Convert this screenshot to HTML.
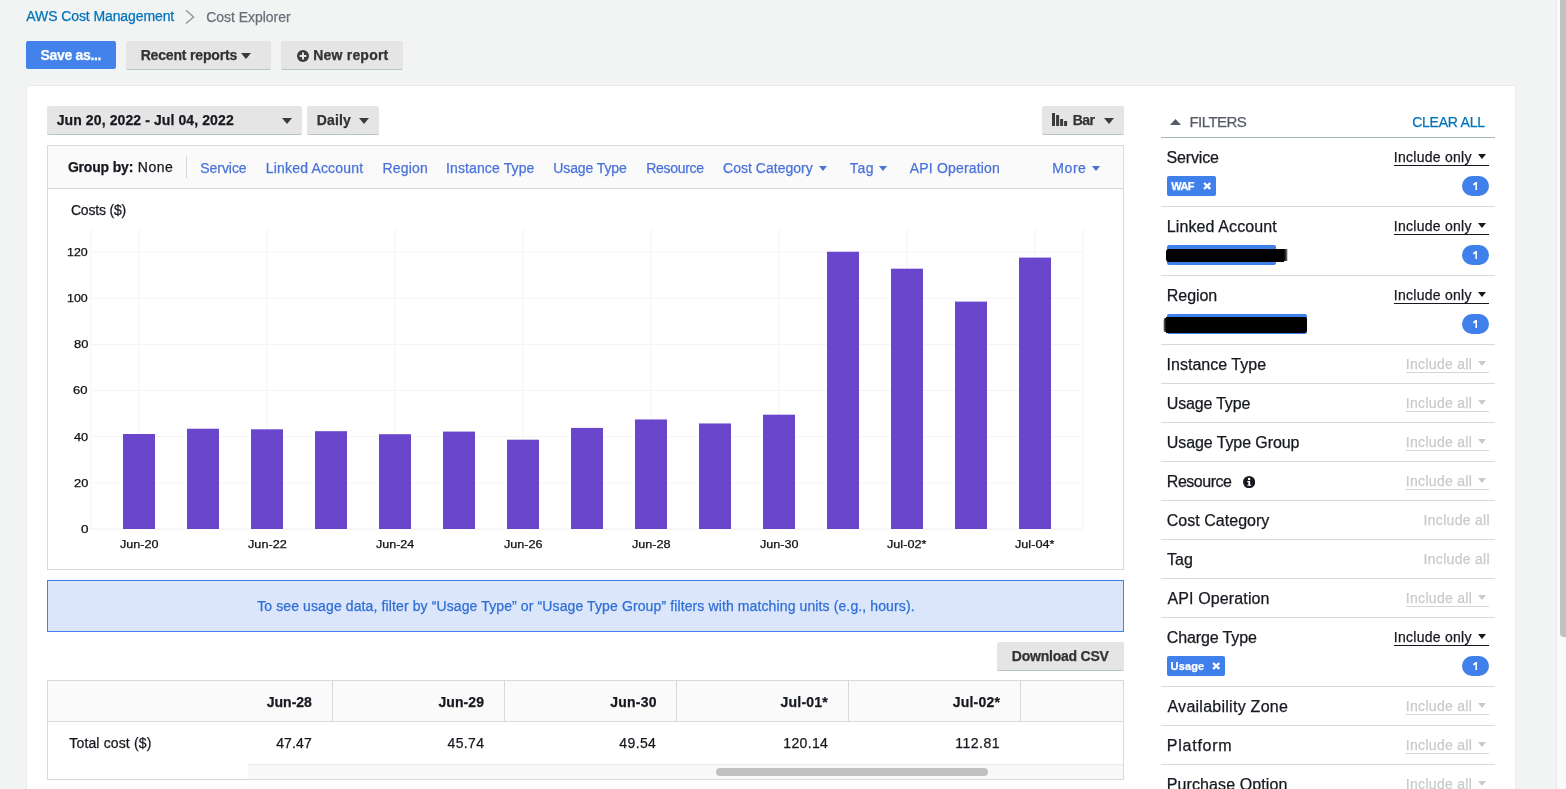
<!DOCTYPE html>
<html>
<head>
<meta charset="utf-8">
<title>Cost Explorer</title>
<style>
*{box-sizing:border-box;margin:0;padding:0}
html,body{width:1566px;height:789px;overflow:hidden;background:#f2f3f3;font-family:"Liberation Sans",sans-serif;color:#16191f}
body{position:relative}
.abs{position:absolute;white-space:nowrap}
.t{position:absolute;white-space:nowrap;line-height:20px;height:20px;-webkit-text-stroke:0.25px currentColor}
.panel{position:absolute;left:27px;top:86px;width:1488px;height:720px;background:#fff;box-shadow:0 0 0 1px #e9ebeb;border-radius:1px}
.btn{position:absolute;height:29px;background:#e5e5e5;border-bottom:1px solid #b9c6c6;border-radius:2px}
.caret{position:absolute;width:0;height:0;border-left:5px solid transparent;border-right:5px solid transparent;border-top:6px solid #3b3b3b}
.chip{position:absolute;height:19.6px;background:#4080ea;border-radius:2px}
.badge{position:absolute;left:1462px;width:27px;height:19.6px;border-radius:10px;background:#4080ea}
.bar{position:absolute;width:32px;background:#6945cb}
.hg{position:absolute;left:91px;width:992px;height:1px;background:#f3f3f3}
.vg{position:absolute;top:229px;width:2px;height:300px;background:#f9f9f9}
.cs{position:absolute;top:681px;width:1px;height:40px;background:#d5dbdb}
</style>
</head>
<body>
<div id="w" style="position:absolute;left:0;top:0;width:1566px;height:789px;will-change:transform">
<!-- breadcrumb chevron -->
<svg class="abs" style="left:184px;top:9px" width="12" height="16" viewBox="0 0 12 16"><path d="M2 1.2 L9.6 7.9 L2 14.6" fill="none" stroke="#879596" stroke-width="1.3"/></svg>

<!-- top buttons -->
<div class="abs" style="left:26px;top:41px;width:90px;height:28px;background:#4282ea;border-radius:2px"></div>
<div class="btn" style="left:126px;top:41px;width:145px"><span class="caret" style="left:115.3px;top:11.8px;border-left-width:5.5px;border-right-width:5.5px"></span></div>
<div class="btn" style="left:281px;top:41px;width:122px">
<svg class="abs" style="left:16.1px;top:8.8px" width="12" height="12" viewBox="0 0 12 12"><circle cx="6" cy="6" r="6" fill="#3b3b3b"/><path d="M6 2.6v6.8M2.6 6h6.8" stroke="#e5e5e5" stroke-width="2"/></svg>
</div>

<div class="panel"></div>

<!-- controls row -->
<div class="btn" style="left:47px;top:106px;width:255px"><span class="caret" style="left:235.1px;top:12.1px"></span></div>
<div class="btn" style="left:307px;top:106px;width:72px"><span class="caret" style="left:52.2px;top:12.1px"></span></div>
<div class="btn" style="left:1042px;top:106px;width:82px"><span class="caret" style="left:61.9px;top:12.1px"></span>
<svg class="abs" style="left:10px;top:7px" width="16" height="13" viewBox="0 0 16 13"><rect x="0" y="0" width="3" height="13" fill="#3b3b3b"/><rect x="4.1" y="2" width="3" height="11" fill="#3b3b3b"/><rect x="8.1" y="6" width="3" height="7" fill="#3b3b3b"/><rect x="12.1" y="8" width="3" height="5" fill="#3b3b3b"/></svg>
</div>

<!-- group by -->
<div class="abs" style="left:47px;top:145px;width:1077px;height:44px;background:#fafafa;border:1px solid #d5dbdb"></div>
<div class="abs" style="left:186px;top:156px;width:1px;height:22px;background:#d5dbdb"></div>
<span class="caret" style="left:819px;top:165.5px;border-left-width:4.2px;border-right-width:4.2px;border-top:5px solid #4a72d9"></span>
<span class="caret" style="left:878.7px;top:165.5px;border-left-width:4.2px;border-right-width:4.2px;border-top:5px solid #4a72d9"></span>
<span class="caret" style="left:1091.7px;top:165.5px;border-left-width:4.2px;border-right-width:4.2px;border-top:5px solid #4a72d9"></span>

<!-- chart box -->
<div class="abs" style="left:47px;top:188px;width:1077px;height:382px;background:#fff;border:1px solid #d5dbdb"></div>
<div class="hg" style="top:528px;background:rgb(249,249,249)"></div>
<div class="hg" style="top:529px;background:rgb(249,249,249)"></div>
<div class="hg" style="top:482px;background:rgb(247,247,247)"></div>
<div class="hg" style="top:483px;background:rgb(251,251,251)"></div>
<div class="hg" style="top:436px;background:rgb(245,245,245)"></div>
<div class="hg" style="top:437px;background:rgb(253,253,253)"></div>
<div class="hg" style="top:390px;background:rgb(243,243,243)"></div>
<div class="hg" style="top:343px;background:rgb(254,254,254)"></div>
<div class="hg" style="top:344px;background:rgb(244,244,244)"></div>
<div class="hg" style="top:297px;background:rgb(252,252,252)"></div>
<div class="hg" style="top:298px;background:rgb(246,246,246)"></div>
<div class="hg" style="top:251px;background:rgb(250,250,250)"></div>
<div class="hg" style="top:252px;background:rgb(248,248,248)"></div>
<div class="vg" style="left:90px"></div>
<div class="vg" style="left:138px"></div>
<div class="vg" style="left:266px"></div>
<div class="vg" style="left:394px"></div>
<div class="vg" style="left:522px"></div>
<div class="vg" style="left:650px"></div>
<div class="vg" style="left:778px"></div>
<div class="vg" style="left:906px"></div>
<div class="vg" style="left:1034px"></div>
<div class="vg" style="left:1082px"></div>
<svg class="abs" style="left:0;top:0" width="1130" height="540" viewBox="0 0 1130 540"><g fill="#6a46cd"><rect x="123" y="433.99" width="32" height="95.01"/><rect x="187" y="428.71" width="32" height="100.29"/><rect x="251" y="429.31" width="32" height="99.69"/><rect x="315" y="431.20" width="32" height="97.80"/><rect x="379" y="434.20" width="32" height="94.80"/><rect x="443" y="431.59" width="32" height="97.41"/><rect x="507" y="439.69" width="32" height="89.31"/><rect x="571" y="427.90" width="32" height="101.10"/><rect x="635" y="419.45" width="32" height="109.55"/><rect x="699" y="423.45" width="32" height="105.55"/><rect x="763" y="414.68" width="32" height="114.32"/><rect x="827" y="251.75" width="32" height="277.25"/><rect x="891" y="268.67" width="32" height="260.33"/><rect x="955" y="301.60" width="32" height="227.40"/><rect x="1019" y="257.59" width="32" height="271.41"/></g></svg>

<!-- info box -->
<div class="abs" style="left:47px;top:580px;width:1077px;height:52px;background:#dbe6fb;border:1px solid #4281ea"></div>

<!-- download -->
<div class="btn" style="left:997px;top:642px;width:127px"></div>

<!-- table -->
<div class="abs" style="left:47px;top:680px;width:1077px;height:100px;background:#fff;border:1px solid #d5dbdb"></div>
<div class="abs" style="left:48px;top:681px;width:1075px;height:41px;background:#fafafa;border-bottom:1px solid #d5dbdb"></div>
<div class="cs" style="left:332px"></div><div class="cs" style="left:504px"></div><div class="cs" style="left:676px"></div><div class="cs" style="left:848px"></div><div class="cs" style="left:1020px"></div>
<div class="abs" style="left:248px;top:764px;width:875px;height:15px;background:#f8f8f8;border-top:1px solid #e8e8e8"></div>
<div class="abs" style="left:716px;top:768px;width:272px;height:8px;border-radius:4px;background:#c1c1c1"></div>

<!-- filters -->
<svg class="abs" style="left:1169.7px;top:119px" width="11" height="6" viewBox="0 0 11 6"><path d="M0 6 L5.5 0 L11 6Z" fill="#545b64"/></svg>
<div class="abs" style="left:1161px;top:137px;width:334px;height:1px;background:#aab7b8"></div>
<div class="abs" style="left:1394px;top:164.6px;width:95px;height:1px;background:#16191f"></div>
<div class="caret" style="left:1478.4px;top:154.3px;border-left-width:4.2px;border-right-width:4.2px;border-top:5px solid #16191f"></div>
<div class="chip" style="left:1167px;top:176.3px;width:49px"><svg class="abs" style="left:35.5px;top:5.7px" width="8.4" height="8" viewBox="0 0 8.4 8"><path d="M1.1 1L7.3 7M7.3 1L1.1 7" stroke="#fff" stroke-width="2.4"/></svg></div>
<div class="badge" style="top:176.3px"><svg class="abs" style="left:10.8px;top:5.9px" width="4.6" height="8.2" viewBox="0 0 4.6 8.2"><path d="M2.5 0H4.5V8.2H2.4V2.5L0.5 3.5L0 2Z" fill="#fff"/></svg></div>
<div class="abs" style="left:1161px;top:206px;width:334px;height:1px;background:#d5d9d9"></div>
<div class="abs" style="left:1394px;top:233.6px;width:95px;height:1px;background:#16191f"></div>
<div class="caret" style="left:1478.4px;top:223.3px;border-left-width:4.2px;border-right-width:4.2px;border-top:5px solid #16191f"></div>
<div class="chip" style="left:1167px;top:245.0px;width:109px;height:20px"></div>
<div class="abs" style="left:1165.7px;top:249.0px;width:118px;height:12.6px;background:#000;border-radius:3px 0 0 3px"></div>
<div class="abs" style="left:1283.6px;top:249.2px;width:4.2px;height:11.6px;background:linear-gradient(90deg,#000,rgba(0,0,0,.75) 55%,rgba(0,0,0,0))"></div>
<div class="badge" style="top:245.3px"><svg class="abs" style="left:10.8px;top:5.9px" width="4.6" height="8.2" viewBox="0 0 4.6 8.2"><path d="M2.5 0H4.5V8.2H2.4V2.5L0.5 3.5L0 2Z" fill="#fff"/></svg></div>
<div class="abs" style="left:1161px;top:275px;width:334px;height:1px;background:#d5d9d9"></div>
<div class="abs" style="left:1394px;top:302.6px;width:95px;height:1px;background:#16191f"></div>
<div class="caret" style="left:1478.4px;top:292.3px;border-left-width:4.2px;border-right-width:4.2px;border-top:5px solid #16191f"></div>
<div class="chip" style="left:1167px;top:314.0px;width:140px"></div>
<div class="abs" style="left:1165.5px;top:317.1px;width:141.7px;height:15.6px;background:#000;border-radius:0 2px 3px 0"></div>
<div class="abs" style="left:1162.6px;top:318.3px;width:3px;height:13.6px;background:linear-gradient(270deg,#000,rgba(0,0,0,.7) 50%,rgba(0,0,0,0));border-radius:4px 0 0 4px"></div>
<div class="badge" style="top:314.3px"><svg class="abs" style="left:10.8px;top:5.9px" width="4.6" height="8.2" viewBox="0 0 4.6 8.2"><path d="M2.5 0H4.5V8.2H2.4V2.5L0.5 3.5L0 2Z" fill="#fff"/></svg></div>
<div class="abs" style="left:1161px;top:344px;width:334px;height:1px;background:#d5d9d9"></div>
<div class="abs" style="left:1406px;top:371.6px;width:83px;height:1px;background:#d3d6d6"></div>
<div class="caret" style="left:1478.4px;top:361.3px;border-left-width:4.2px;border-right-width:4.2px;border-top:5px solid #c9cbcb"></div>
<div class="abs" style="left:1161px;top:383px;width:334px;height:1px;background:#d5d9d9"></div>
<div class="abs" style="left:1406px;top:410.6px;width:83px;height:1px;background:#d3d6d6"></div>
<div class="caret" style="left:1478.4px;top:400.3px;border-left-width:4.2px;border-right-width:4.2px;border-top:5px solid #c9cbcb"></div>
<div class="abs" style="left:1161px;top:422px;width:334px;height:1px;background:#d5d9d9"></div>
<div class="abs" style="left:1406px;top:449.6px;width:83px;height:1px;background:#d3d6d6"></div>
<div class="caret" style="left:1478.4px;top:439.3px;border-left-width:4.2px;border-right-width:4.2px;border-top:5px solid #c9cbcb"></div>
<div class="abs" style="left:1161px;top:461px;width:334px;height:1px;background:#d5d9d9"></div>
<svg class="abs" style="left:1242.8px;top:475.6px" width="12.2" height="12.2" viewBox="0 0 12 12"><circle cx="6" cy="6" r="6" fill="#16191f"/><circle cx="6" cy="3" r="1.25" fill="#fff"/><path d="M4.3 5h2.7v3.6h1v1.1H4.3V8.6h1V6.1h-1z" fill="#fff"/></svg>
<div class="abs" style="left:1406px;top:488.6px;width:83px;height:1px;background:#d3d6d6"></div>
<div class="caret" style="left:1478.4px;top:478.3px;border-left-width:4.2px;border-right-width:4.2px;border-top:5px solid #c9cbcb"></div>
<div class="abs" style="left:1161px;top:500px;width:334px;height:1px;background:#d5d9d9"></div>
<div class="abs" style="left:1161px;top:539px;width:334px;height:1px;background:#d5d9d9"></div>
<div class="abs" style="left:1161px;top:578px;width:334px;height:1px;background:#d5d9d9"></div>
<div class="abs" style="left:1406px;top:605.6px;width:83px;height:1px;background:#d3d6d6"></div>
<div class="caret" style="left:1478.4px;top:595.3px;border-left-width:4.2px;border-right-width:4.2px;border-top:5px solid #c9cbcb"></div>
<div class="abs" style="left:1161px;top:617px;width:334px;height:1px;background:#d5d9d9"></div>
<div class="abs" style="left:1394px;top:644.6px;width:95px;height:1px;background:#16191f"></div>
<div class="caret" style="left:1478.4px;top:634.3px;border-left-width:4.2px;border-right-width:4.2px;border-top:5px solid #16191f"></div>
<div class="chip" style="left:1167px;top:656.3px;width:58px"><svg class="abs" style="left:44.5px;top:5.7px" width="8.4" height="8" viewBox="0 0 8.4 8"><path d="M1.1 1L7.3 7M7.3 1L1.1 7" stroke="#fff" stroke-width="2.4"/></svg></div>
<div class="badge" style="top:656.3px"><svg class="abs" style="left:10.8px;top:5.9px" width="4.6" height="8.2" viewBox="0 0 4.6 8.2"><path d="M2.5 0H4.5V8.2H2.4V2.5L0.5 3.5L0 2Z" fill="#fff"/></svg></div>
<div class="abs" style="left:1161px;top:686px;width:334px;height:1px;background:#d5d9d9"></div>
<div class="abs" style="left:1406px;top:713.6px;width:83px;height:1px;background:#d3d6d6"></div>
<div class="caret" style="left:1478.4px;top:703.3px;border-left-width:4.2px;border-right-width:4.2px;border-top:5px solid #c9cbcb"></div>
<div class="abs" style="left:1161px;top:725px;width:334px;height:1px;background:#d5d9d9"></div>
<div class="abs" style="left:1406px;top:752.6px;width:83px;height:1px;background:#d3d6d6"></div>
<div class="caret" style="left:1478.4px;top:742.3px;border-left-width:4.2px;border-right-width:4.2px;border-top:5px solid #c9cbcb"></div>
<div class="abs" style="left:1161px;top:764px;width:334px;height:1px;background:#d5d9d9"></div>
<div class="abs" style="left:1406px;top:791.6px;width:83px;height:1px;background:#d3d6d6"></div>
<div class="caret" style="left:1478.4px;top:781.3px;border-left-width:4.2px;border-right-width:4.2px;border-top:5px solid #c9cbcb"></div>
<div class="abs" style="left:1161px;top:803px;width:334px;height:1px;background:#d5d9d9"></div>

<!-- all text -->
<div class="t" style="left:26.35px;top:6.06px;font-size:14px;color:#0073bb;letter-spacing:-0.097px">AWS Cost Management</div>
<div class="t" style="left:206.20px;top:7.06px;font-size:14px;color:#687078;letter-spacing:-0.026px">Cost Explorer</div>
<div class="t" style="left:40.53px;top:45.16px;font-size:14px;color:#fff;letter-spacing:-0.327px;font-weight:bold">Save as...</div>
<div class="t" style="left:140.66px;top:45.16px;font-size:14px;color:#333;letter-spacing:-0.165px;font-weight:bold">Recent reports</div>
<div class="t" style="left:313.25px;top:45.16px;font-size:14px;color:#333;letter-spacing:0.202px;font-weight:bold">New report</div>
<div class="t" style="left:56.70px;top:110.16px;font-size:14px;color:#16191f;letter-spacing:0.102px;font-weight:bold">Jun 20, 2022 - Jul 04, 2022</div>
<div class="t" style="left:316.85px;top:110.16px;font-size:14px;color:#333;letter-spacing:0.136px;font-weight:bold">Daily</div>
<div class="t" style="left:1072.74px;top:110.16px;font-size:14px;color:#333;letter-spacing:-0.555px;font-weight:bold">Bar</div>
<div class="t" style="left:67.89px;top:157.36px;font-size:14px;color:#16191f;letter-spacing:-0.183px;font-weight:bold">Group by:</div>
<div class="t" style="left:137.85px;top:157.36px;font-size:14px;color:#16191f;letter-spacing:0.526px">None</div>
<div class="t" style="left:200.30px;top:158.36px;font-size:14px;color:#4a72d9;letter-spacing:-0.060px">Service</div>
<div class="t" style="left:265.78px;top:158.36px;font-size:14px;color:#4a72d9;letter-spacing:0.181px">Linked Account</div>
<div class="t" style="left:382.59px;top:158.36px;font-size:14px;color:#4a72d9;letter-spacing:0.172px">Region</div>
<div class="t" style="left:446.03px;top:158.36px;font-size:14px;color:#4a72d9;letter-spacing:0.117px">Instance Type</div>
<div class="t" style="left:553.27px;top:158.36px;font-size:14px;color:#4a72d9;letter-spacing:-0.107px">Usage Type</div>
<div class="t" style="left:646.18px;top:158.36px;font-size:14px;color:#4a72d9;letter-spacing:-0.289px">Resource</div>
<div class="t" style="left:723.10px;top:158.36px;font-size:14px;color:#4a72d9;letter-spacing:0.010px">Cost Category</div>
<div class="t" style="left:849.84px;top:158.36px;font-size:14px;color:#4a72d9;letter-spacing:0.594px">Tag</div>
<div class="t" style="left:909.87px;top:158.36px;font-size:14px;color:#4a72d9;letter-spacing:0.165px">API Operation</div>
<div class="t" style="left:1052.30px;top:158.36px;font-size:14px;color:#4a72d9;letter-spacing:0.568px">More</div>
<div class="t" style="left:70.90px;top:199.96px;font-size:14px;color:#16191f;letter-spacing:-0.179px">Costs ($)</div>
<div class="t" style="left:257.15px;top:595.86px;font-size:14px;color:#2f6fd6;letter-spacing:0.115px">To see usage data, filter by “Usage Type” or “Usage Type Group” filters with matching units (e.g., hours).</div>
<div class="t" style="left:1011.85px;top:645.96px;font-size:14px;color:#333;letter-spacing:-0.225px;font-weight:bold">Download CSV</div>
<div class="t" style="left:266.68px;top:692.36px;font-size:14px;color:#16191f;letter-spacing:0.023px;font-weight:bold">Jun-28</div>
<div class="t" style="left:438.49px;top:692.36px;font-size:14px;color:#16191f;letter-spacing:0.066px;font-weight:bold">Jun-29</div>
<div class="t" style="left:610.25px;top:692.36px;font-size:14px;color:#16191f;letter-spacing:0.215px;font-weight:bold">Jun-30</div>
<div class="t" style="left:780.49px;top:692.36px;font-size:14px;color:#16191f;letter-spacing:0.225px;font-weight:bold">Jul-01*</div>
<div class="t" style="left:952.68px;top:692.36px;font-size:14px;color:#16191f;letter-spacing:0.210px;font-weight:bold">Jul-02*</div>
<div class="t" style="left:69.35px;top:733.46px;font-size:14px;color:#16191f;letter-spacing:0.142px">Total cost ($)</div>
<div class="t" style="left:276.18px;top:733.46px;font-size:14px;color:#16191f;letter-spacing:0.159px">47.47</div>
<div class="t" style="left:447.47px;top:733.46px;font-size:14px;color:#16191f;letter-spacing:0.377px">45.74</div>
<div class="t" style="left:619.27px;top:733.46px;font-size:14px;color:#16191f;letter-spacing:0.399px">49.54</div>
<div class="t" style="left:783.25px;top:733.46px;font-size:14px;color:#16191f;letter-spacing:0.357px">120.14</div>
<div class="t" style="left:955.25px;top:733.46px;font-size:14px;color:#16191f;letter-spacing:0.488px">112.81</div>
<div class="t" style="left:80.64px;top:518.92px;font-size:10.7px;color:#111;transform:scaleX(1.2600);transform-origin:0 50%">0</div>
<div class="t" style="left:73.76px;top:472.77px;font-size:10.7px;color:#111;transform:scaleX(1.2021);transform-origin:0 50%">20</div>
<div class="t" style="left:73.87px;top:426.62px;font-size:10.7px;color:#111;transform:scaleX(1.1933);transform-origin:0 50%">40</div>
<div class="t" style="left:73.48px;top:380.46px;font-size:10.7px;color:#111;transform:scaleX(1.2154);transform-origin:0 50%">60</div>
<div class="t" style="left:73.61px;top:334.31px;font-size:10.7px;color:#111;transform:scaleX(1.2047);transform-origin:0 50%">80</div>
<div class="t" style="left:67.32px;top:288.15px;font-size:10.7px;color:#111;transform:scaleX(1.1579);transform-origin:0 50%">100</div>
<div class="t" style="left:67.32px;top:242.00px;font-size:10.7px;color:#111;transform:scaleX(1.1579);transform-origin:0 50%">120</div>
<div class="t" style="left:119.63px;top:534.42px;font-size:10.7px;color:#111;transform:scaleX(1.1779);transform-origin:0 50%">Jun-20</div>
<div class="t" style="left:247.63px;top:534.42px;font-size:10.7px;color:#111;transform:scaleX(1.1859);transform-origin:0 50%">Jun-22</div>
<div class="t" style="left:375.64px;top:534.42px;font-size:10.7px;color:#111;transform:scaleX(1.1717);transform-origin:0 50%">Jun-24</div>
<div class="t" style="left:503.63px;top:534.42px;font-size:10.7px;color:#111;transform:scaleX(1.1805);transform-origin:0 50%">Jun-26</div>
<div class="t" style="left:631.63px;top:534.42px;font-size:10.7px;color:#111;transform:scaleX(1.1798);transform-origin:0 50%">Jun-28</div>
<div class="t" style="left:759.63px;top:534.42px;font-size:10.7px;color:#111;transform:scaleX(1.1779);transform-origin:0 50%">Jun-30</div>
<div class="t" style="left:887.28px;top:534.42px;font-size:10.7px;color:#111;transform:scaleX(1.1846);transform-origin:0 50%">Jul-02*</div>
<div class="t" style="left:1015.28px;top:534.42px;font-size:10.7px;color:#111;transform:scaleX(1.1846);transform-origin:0 50%">Jul-04*</div>
<div class="t" style="left:1189.49px;top:111.77px;font-size:15px;color:#545b64;letter-spacing:-0.554px">FILTERS</div>
<div class="t" style="left:1412.20px;top:112.06px;font-size:14px;color:#0073bb;letter-spacing:-0.237px">CLEAR ALL</div>
<div class="t" style="left:1166.58px;top:148.48px;font-size:16px;color:#16191f;letter-spacing:-0.158px">Service</div>
<div class="t" style="left:1393.85px;top:147.36px;font-size:14px;color:#16191f;letter-spacing:0.258px">Include only</div>
<div class="t" style="left:1171.20px;top:176.13px;font-size:11px;color:#fff;letter-spacing:-0.517px;font-weight:bold">WAF</div>
<div class="t" style="left:1166.84px;top:217.48px;font-size:16px;color:#16191f;letter-spacing:0.107px">Linked Account</div>
<div class="t" style="left:1393.85px;top:216.36px;font-size:14px;color:#16191f;letter-spacing:0.258px">Include only</div>
<div class="t" style="left:1166.84px;top:286.48px;font-size:16px;color:#16191f;letter-spacing:-0.058px">Region</div>
<div class="t" style="left:1393.85px;top:285.36px;font-size:14px;color:#16191f;letter-spacing:0.258px">Include only</div>
<div class="t" style="left:1166.55px;top:355.48px;font-size:16px;color:#16191f;letter-spacing:0.020px">Instance Type</div>
<div class="t" style="left:1405.85px;top:354.36px;font-size:14px;color:#c9cbcb;letter-spacing:0.298px">Include all</div>
<div class="t" style="left:1166.86px;top:394.48px;font-size:16px;color:#16191f;letter-spacing:-0.184px">Usage Type</div>
<div class="t" style="left:1405.85px;top:393.36px;font-size:14px;color:#c9cbcb;letter-spacing:0.298px">Include all</div>
<div class="t" style="left:1166.86px;top:433.48px;font-size:16px;color:#16191f;letter-spacing:-0.098px">Usage Type Group</div>
<div class="t" style="left:1405.85px;top:432.36px;font-size:14px;color:#c9cbcb;letter-spacing:0.298px">Include all</div>
<div class="t" style="left:1166.84px;top:472.48px;font-size:16px;color:#16191f;letter-spacing:-0.490px">Resource</div>
<div class="t" style="left:1405.85px;top:471.36px;font-size:14px;color:#c9cbcb;letter-spacing:0.298px">Include all</div>
<div class="t" style="left:1166.73px;top:511.48px;font-size:16px;color:#16191f;letter-spacing:0.031px">Cost Category</div>
<div class="t" style="left:1423.60px;top:510.36px;font-size:14px;color:#c9cbcb;letter-spacing:0.301px">Include all</div>
<div class="t" style="left:1167.12px;top:550.48px;font-size:16px;color:#16191f;letter-spacing:-0.018px">Tag</div>
<div class="t" style="left:1423.60px;top:549.36px;font-size:14px;color:#c9cbcb;letter-spacing:0.301px">Include all</div>
<div class="t" style="left:1167.48px;top:589.48px;font-size:16px;color:#16191f;letter-spacing:0.126px">API Operation</div>
<div class="t" style="left:1405.85px;top:588.36px;font-size:14px;color:#c9cbcb;letter-spacing:0.298px">Include all</div>
<div class="t" style="left:1166.73px;top:628.48px;font-size:16px;color:#16191f;letter-spacing:-0.116px">Charge Type</div>
<div class="t" style="left:1393.85px;top:627.36px;font-size:14px;color:#16191f;letter-spacing:0.258px">Include only</div>
<div class="t" style="left:1170.57px;top:656.13px;font-size:11px;color:#fff;letter-spacing:0.134px;font-weight:bold">Usage</div>
<div class="t" style="left:1167.48px;top:697.48px;font-size:16px;color:#16191f;letter-spacing:0.262px">Availability Zone</div>
<div class="t" style="left:1405.85px;top:696.36px;font-size:14px;color:#c9cbcb;letter-spacing:0.298px">Include all</div>
<div class="t" style="left:1166.84px;top:736.48px;font-size:16px;color:#16191f;letter-spacing:0.747px">Platform</div>
<div class="t" style="left:1405.85px;top:735.36px;font-size:14px;color:#c9cbcb;letter-spacing:0.298px">Include all</div>
<div class="t" style="left:1166.84px;top:775.48px;font-size:16px;color:#16191f;letter-spacing:0.097px">Purchase Option</div>
<div class="t" style="left:1405.85px;top:774.36px;font-size:14px;color:#c9cbcb;letter-spacing:0.298px">Include all</div>

<!-- page scrollbar -->
<div class="abs" style="left:1556px;top:0;width:10px;height:789px;background:#fafafa;border-left:1px solid #e8e8e8"></div>
<div class="abs" style="left:1560px;top:0;width:8px;height:637px;border-radius:0 0 0 4px;background:#c1c1c1"></div>
</div>
</body>
</html>
